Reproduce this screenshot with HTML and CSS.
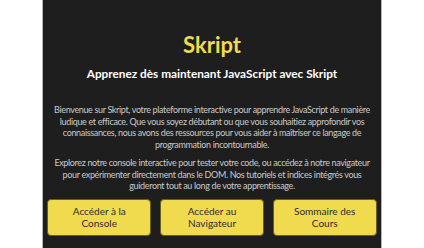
FILE: index.html
```html
<!DOCTYPE html>
<html lang="fr">
<head>
  <meta charset="UTF-8">
  <meta name="viewport" content="width=device-width, initial-scale=1.0">
  <title>Skript - Apprendre JavaScript</title>
  <link rel="stylesheet" href="styles.css">
</head>
<body>
  <div class="container">
    <h1>Skript</h1>
    <h2>Apprenez dès maintenant JavaScript avec Skript</h2>

    <p>Bienvenue sur Skript, votre plateforme interactive pour apprendre JavaScript de manière ludique et efficace. Que vous soyez débutant ou que vous souhaitiez approfondir vos connaissances, nous avons des ressources pour vous aider à maîtriser ce langage de programmation incontournable.</p>
    <p>Explorez notre console interactive pour tester votre code, ou accédez à notre navigateur pour expérimenter directement dans le DOM. Nos tutoriels et indices intégrés vous guideront tout au long de votre apprentissage.</p>

    <div class="buttons">
      <a href="#" class="btn">Accéder à la Console</a>
      <a href="#" class="btn">Accéder au Navigateur</a>
      <a href="#" class="btn">Sommaire des Cours</a>
    </div>
  </div>
</body>
</html>
```

FILE: styles.css
```css
* { margin: 0; padding: 0; box-sizing: border-box; }
html, body { width: 100%; height: 100%; }
body {
  background: #fff;
  font-family: Lato, "Open Sans", sans-serif;
}
.container {
  width: 80%;
  min-height: 100%;
  margin: 0 auto;
  padding: 30px 4px 0;
  background-color: #1e1e1e;
  border-left: 1px solid #b5b5b5;
  border-right: 1px solid #b5b5b5;
  text-align: center;
}
h1 {
  color: #f0db4f;
  font-size: 22px;
  line-height: 30px;
}
h2 {
  color: #fff;
  font-size: 11.8px;
  line-height: 18px;
  margin: 5px 0 21px;
}
p {
  color: #cacaca;
  font-size: 9px;
  letter-spacing: -0.35px;
  line-height: 11.5px;
  padding: 0 5px;
  margin-bottom: 7px;
}
.buttons {
  display: flex;
  gap: 9px;
  margin-top: 1px;
}
.btn {
  flex: 1;
  height: 37px;
  display: flex;
  align-items: center;
  justify-content: center;
  padding: 0 18px;
  background: #f0db4f;
  color: #2b2b2b;
  border: 1px solid #6b5f1e;
  border-radius: 4px;
  font-size: 10px;
  line-height: 12px;
  text-decoration: none;
}
```
